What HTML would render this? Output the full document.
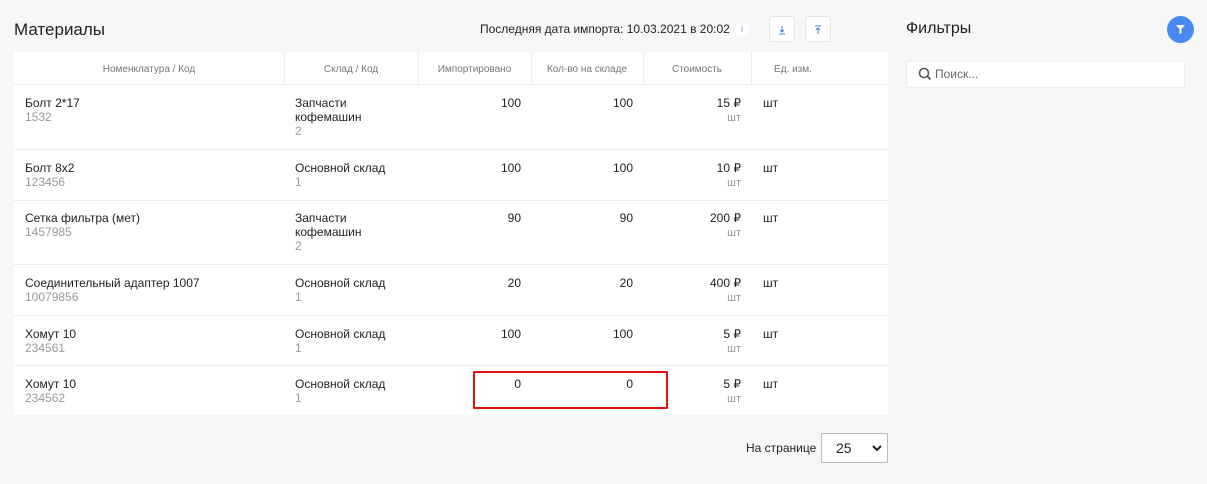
<!DOCTYPE html>
<html><head><meta charset="utf-8"><style>
*{margin:0;padding:0;box-sizing:border-box}
body{width:1207px;height:484px;background:#f7f7f7;font-family:"Liberation Sans",sans-serif;position:relative;overflow:hidden;color:#222}
.a{position:absolute;white-space:nowrap}
.t{font-size:12px;line-height:14px}
.g{color:#999}
.r{text-align:right}
.hd{font-size:10px;color:#777;text-align:center;top:64px}
.vl{position:absolute;top:52px;height:33px;width:1px;background:#eee}
.hl{position:absolute;left:14px;width:874px;height:1px;background:#ececec}
.btn{position:absolute;width:26px;height:26px;background:#fff;border:1px solid #e6e6e6;border-radius:3px;top:16px}
</style></head><body>
<div class="a" style="left:14px;top:20px;font-size:17px">Материалы</div>
<div class="a t" style="left:480px;top:22px">Последняя дата импорта: 10.03.2021 в 20:02</div>
<div class="a" style="left:735px;top:23px;width:14px;height:14px;border-radius:7px;background:#fff;font-size:8px;color:#4a7fe0;text-align:center;line-height:14px">ⅰ</div>
<div class="btn" style="left:769px"><svg width="26" height="26"><path d="M12 9v6M10 13l2 2 2-2M9 17h6" stroke="#4a7fe0" fill="none"/></svg></div>
<div class="btn" style="left:805px"><svg width="26" height="26"><path d="M9 9h6M12 11v6M10 13l2-2 2 2" stroke="#4a7fe0" fill="none"/></svg></div>
<div class="a" style="left:906px;top:20px;font-size:16px">Фильтры</div>
<div class="a" style="left:1167px;top:16px;width:27px;height:27px;border-radius:50%;background:#4a8af0"><svg width="27" height="27"><path d="M9 9h9l-3.5 4v4l-2 1v-5z" fill="#fff"/></svg></div>
<div class="a" style="left:906px;top:61px;width:279px;height:27px;background:#fff;border:1px solid #eee;border-radius:2px"></div>
<svg class="a" style="left:918px;top:67px" width="14" height="14"><circle cx="6" cy="6" r="4.5" stroke="#555" stroke-width="1.6" fill="none"/><path d="M9.5 9.5l3 3" stroke="#555" stroke-width="1.8"/></svg>
<div class="a t" style="left:935px;top:67px;color:#666">Поиск...</div>

<div class="a" style="left:14px;top:52px;width:874px;height:363px;background:#fff"></div>
<div class="vl" style="left:284px"></div><div class="vl" style="left:418px"></div><div class="vl" style="left:531px"></div><div class="vl" style="left:643px"></div><div class="vl" style="left:751px"></div>
<div class="a hd" style="left:14px;width:270px">Номенклатура / Код</div>
<div class="a hd" style="left:284px;width:134px">Склад / Код</div>
<div class="a hd" style="left:418px;width:113px">Импортировано</div>
<div class="a hd" style="left:531px;width:112px">Кол-во на складе</div>
<div class="a hd" style="left:643px;width:108px">Стоимость</div>
<div class="a hd" style="left:751px;width:84px">Ед. изм.</div>
<div class="hl" style="top:84px"></div><div class="hl" style="top:149px"></div><div class="hl" style="top:200px"></div><div class="hl" style="top:264px"></div><div class="hl" style="top:315px"></div><div class="hl" style="top:365px"></div>

<div class="a t" style="left:25px;top:96px">Болт 2*17<br><span class="g">1532</span></div>
<div class="a t" style="left:295px;top:96px">Запчасти<br>кофемашин<br><span class="g">2</span></div>
<div class="a t r" style="left:421px;width:100px;top:96px">100</div>
<div class="a t r" style="left:533px;width:100px;top:96px">100</div>
<div class="a t r" style="left:641px;width:100px;top:96px">15 ₽<br><span class="g" style="font-size:11px">шт</span></div>
<div class="a t" style="left:763px;top:96px">шт</div>

<div class="a t" style="left:25px;top:161px">Болт 8x2<br><span class="g">123456</span></div>
<div class="a t" style="left:295px;top:161px">Основной склад<br><span class="g">1</span></div>
<div class="a t r" style="left:421px;width:100px;top:161px">100</div>
<div class="a t r" style="left:533px;width:100px;top:161px">100</div>
<div class="a t r" style="left:641px;width:100px;top:161px">10 ₽<br><span class="g" style="font-size:11px">шт</span></div>
<div class="a t" style="left:763px;top:161px">шт</div>

<div class="a t" style="left:25px;top:211px">Сетка фильтра (мет)<br><span class="g">1457985</span></div>
<div class="a t" style="left:295px;top:211px">Запчасти<br>кофемашин<br><span class="g">2</span></div>
<div class="a t r" style="left:421px;width:100px;top:211px">90</div>
<div class="a t r" style="left:533px;width:100px;top:211px">90</div>
<div class="a t r" style="left:641px;width:100px;top:211px">200 ₽<br><span class="g" style="font-size:11px">шт</span></div>
<div class="a t" style="left:763px;top:211px">шт</div>

<div class="a t" style="left:25px;top:276px">Соединительный адаптер 1007<br><span class="g">10079856</span></div>
<div class="a t" style="left:295px;top:276px">Основной склад<br><span class="g">1</span></div>
<div class="a t r" style="left:421px;width:100px;top:276px">20</div>
<div class="a t r" style="left:533px;width:100px;top:276px">20</div>
<div class="a t r" style="left:641px;width:100px;top:276px">400 ₽<br><span class="g" style="font-size:11px">шт</span></div>
<div class="a t" style="left:763px;top:276px">шт</div>

<div class="a t" style="left:25px;top:327px">Хомут 10<br><span class="g">234561</span></div>
<div class="a t" style="left:295px;top:327px">Основной склад<br><span class="g">1</span></div>
<div class="a t r" style="left:421px;width:100px;top:327px">100</div>
<div class="a t r" style="left:533px;width:100px;top:327px">100</div>
<div class="a t r" style="left:641px;width:100px;top:327px">5 ₽<br><span class="g" style="font-size:11px">шт</span></div>
<div class="a t" style="left:763px;top:327px">шт</div>

<div class="a t" style="left:25px;top:377px">Хомут 10<br><span class="g">234562</span></div>
<div class="a t" style="left:295px;top:377px">Основной склад<br><span class="g">1</span></div>
<div class="a t r" style="left:421px;width:100px;top:377px">0</div>
<div class="a t r" style="left:533px;width:100px;top:377px">0</div>
<div class="a t r" style="left:641px;width:100px;top:377px">5 ₽<br><span class="g" style="font-size:11px">шт</span></div>
<div class="a t" style="left:763px;top:377px">шт</div>
<div class="a" style="left:473px;top:371px;width:195px;height:38px;border:2px solid #e01010;border-radius:1px"></div>

<div class="a t" style="left:746px;top:441px">На странице</div>
<div class="a" style="left:821px;top:433px;width:67px;height:30px;background:#fff;border:1px solid #bbb;border-radius:2px;font-size:14px;line-height:28px;padding-left:14px">25</div>
<svg class="a" style="left:872px;top:444px" width="10" height="8"><path d="M1 2l4 4 4-4" stroke="#222" stroke-width="2" fill="none"/></svg>
</body></html>
